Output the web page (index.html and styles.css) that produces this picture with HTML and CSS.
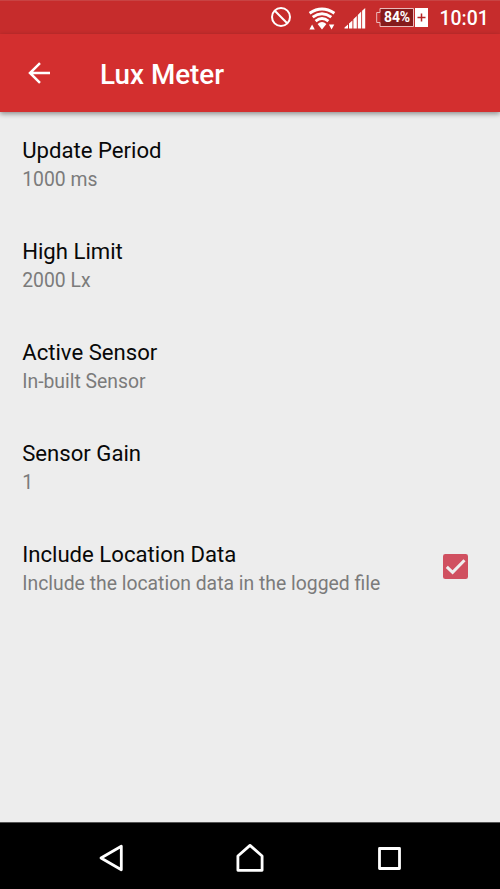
FILE: index.html
```html
<!DOCTYPE html>
<html lang="en">
<head>
<meta charset="utf-8">
<title>Lux Meter</title>
<link rel="stylesheet" href="styles.css">
</head>
<body>
<div class="screen">
  <div class="status">
    <svg class="blocked" width="22" height="22" viewBox="0 0 22 22"><circle cx="11" cy="11" r="9"/><path d="M4.8 4.8 17.2 17.2"/></svg>
    <svg class="wifi" width="28" height="24" viewBox="0 0 28 24">
      <g class="arcs"><path d="M1.6 6.2Q14 -2.2 26.4 6.2"/><path d="M4.7 10.2Q14 3.4 23.3 10.2"/><path d="M7.6 14.2Q14 8.8 20.4 14.2"/></g>
      <path d="M9.6 17Q14 12.8 18.4 17L14 22.6ZM1.4 22.6h5.4L4.1 17.4ZM20.9 17.4h5.4L23.6 22.6Z"/>
    </svg>
    <svg class="signal" width="22" height="21" viewBox="0 0 22 21"><path d="M.5 20.5v-1l3.5-3v4ZM5 20.5v-5l3.4-3v8ZM9.4 20.5v-9.3l3.4-3.2v12.5ZM13.8 20.5V6.9L17.2 3.6v16.9ZM18.1 20.5V2.8L21.2 0v20.5Z"/></svg>
    <div class="battery">
      <svg class="case" width="38" height="19" viewBox="0 0 38 19"><path class="fill" d="M4.5 1h33v17h-33Z"/><path d="M4 .5h33.5v18H4v-4H.7v-10H4Z"/></svg>
      <span class="level">84%</span><span class="charge"><svg width="9" height="9" viewBox="0 0 9 9"><path d="M4.5.5v8M.5 4.5h8"/></svg></span>
    </div>
    <span class="clock">10:01</span>
  </div>
  <header class="appbar">
    <svg width="24" height="24" viewBox="0 0 24 24"><path d="M23 12H3M13 2.2 3 12 13 21.8"/></svg>
    <h1>Lux Meter</h1>
  </header>
  <main class="list">
    <div class="item"><div><h2>Update Period</h2><p>1000 ms</p></div></div>
    <div class="item"><div><h2>High Limit</h2><p>2000 Lx</p></div></div>
    <div class="item"><div><h2>Active Sensor</h2><p>In-built Sensor</p></div></div>
    <div class="item"><div><h2>Sensor Gain</h2><p>1</p></div></div>
    <div class="item"><div><h2>Include Location Data</h2><p>Include the location data in the logged file</p></div>
      <svg class="check" width="25" height="25" viewBox="0 0 25 25"><rect width="25" height="25" rx="2.3"/><path d="m3.8 12.8 5.8 5.5L21.5 6.2"/></svg>
    </div>
  </main>
  <nav class="navbar">
    <svg width="26" height="28" viewBox="0 0 26 28"><path d="M3 14 23.3 2.2v23.6Z"/></svg>
    <svg width="28" height="28" viewBox="0 0 28 28"><path d="M14 1.4 1.9 12v14.3h24.2V12Z"/></svg>
    <svg width="23" height="23" viewBox="0 0 23 23"><rect x="1.5" y="1.5" width="20" height="20"/></svg>
  </nav>
</div>
</body>
</html>
```
FILE: styles.css
```css
* { box-sizing: border-box; }
body { margin: 0; font-family: Roboto, "Liberation Sans", sans-serif; }
h1, h2, p { margin: 0; white-space: nowrap; }
svg { display: block; flex: none; fill: none; }
.screen { width: 500px; height: 889px; display: flex; flex-direction: column; overflow: hidden; background: #ededed; }

.status { height: 34px; flex: none; display: flex; align-items: flex-start; padding-left: 270px; background: #c62c2c; border-top: 1px solid #c84343; color: #fff; }
.blocked { margin-top: 5px; stroke: #fff; stroke-width: 2; }
.wifi { margin: 6px 0 0 16px; fill: #fff; }
.arcs { fill: none; stroke: #fff; stroke-width: 2.9; }
.signal { margin: 7px 0 0 8px; fill: #fff; }
.battery { display: grid; grid-template-columns: 38px 13px; column-gap: 1px; height: 19px; margin: 7px 0 0 10px; }
.case, .level { grid-area: 1 / 1; }
.case { stroke: #eababa; }
.case .fill { fill: #851b1b; stroke: none; }
.level { z-index: 1; padding-left: 4px; font-size: 14px; font-weight: 700; line-height: 19px; text-align: center; letter-spacing: -.2px; }
.charge { grid-area: 1 / 2; display: flex; align-items: center; justify-content: center; background: #fff; }
.charge svg { stroke: #b52525; stroke-width: 1.5; }
.clock { margin: 6px 0 0 11.5px; font-size: 19.4px; font-weight: 500; line-height: 24px; }

.appbar { position: relative; height: 78px; flex: none; display: flex; align-items: center; padding: 0 27px; gap: 49px; background: #d32f2f; box-shadow: 0 2px 5px rgba(0, 0, 0, .4); }
.appbar svg { stroke: #fff; stroke-width: 2.5; }
.appbar h1 { color: #fff; font-size: 27.8px; font-weight: 500; line-height: 34px; padding-top: 3px; }

.list { flex: 1; padding-top: 15px; }
.item { height: 101px; display: flex; align-items: flex-start; justify-content: space-between; padding: 10px 32px 0 22.2px; }
.item h2 { color: #080808; font-size: 22.15px; font-weight: 400; line-height: 27px; }
.item p { color: #7b7b7b; font-size: 19.36px; line-height: 23px; margin-top: 4px; }
.check { margin-top: 13px; }
.check rect { fill: #d05060; }
.check path { stroke: #efefef; stroke-width: 3; }

.navbar { height: 67px; flex: none; display: flex; align-items: center; padding: 4px 0 0 98px; background: #000; border-top: 1px solid #555; }
.navbar svg { stroke: #fff; stroke-width: 2.8; stroke-linejoin: round; }
.navbar svg + svg { margin-left: 112px; }
.navbar svg:last-child { margin-left: 113.5px; }
```
